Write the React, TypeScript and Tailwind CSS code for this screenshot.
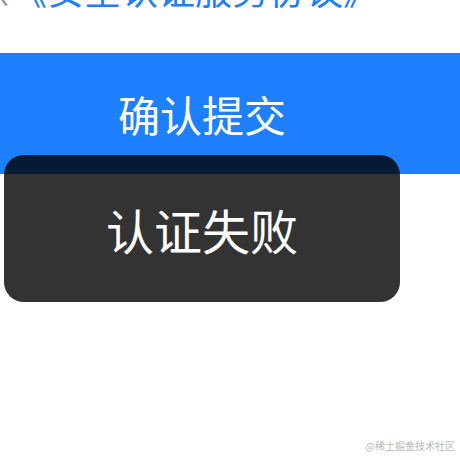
const cjk = { fontFamily: '"Noto Sans CJK SC", "Noto Sans", sans-serif' };

export default function App() {
  return (
    <div className="relative h-[460px] w-[460px] overflow-hidden bg-white" style={cjk}>
      <p className="-mt-[29px] ml-[-27px] h-[37px] whitespace-nowrap text-[37px] leading-[37px]">
        <span className="text-[#999999]">意</span>
        <span className="text-[#1f80ff]">《安全认证服务协议》</span>
      </p>

      <button
        type="button"
        className="mt-[45px] flex h-[121px] w-full items-center bg-[#1f80ff] text-white"
      >
        <span className="w-[404px] text-center text-[42px] leading-none">确认提交</span>
      </button>

      <div className="absolute left-[4px] top-[155px] flex h-[147px] w-[396px] items-center justify-center rounded-[20px] bg-black/80 text-[48px] leading-none text-white">
        认证失败
      </div>

      <span className="absolute bottom-[7px] right-[5px] text-[10px] text-[#b8b8b8]">
        @稀土掘金技术社区
      </span>
    </div>
  );
}
